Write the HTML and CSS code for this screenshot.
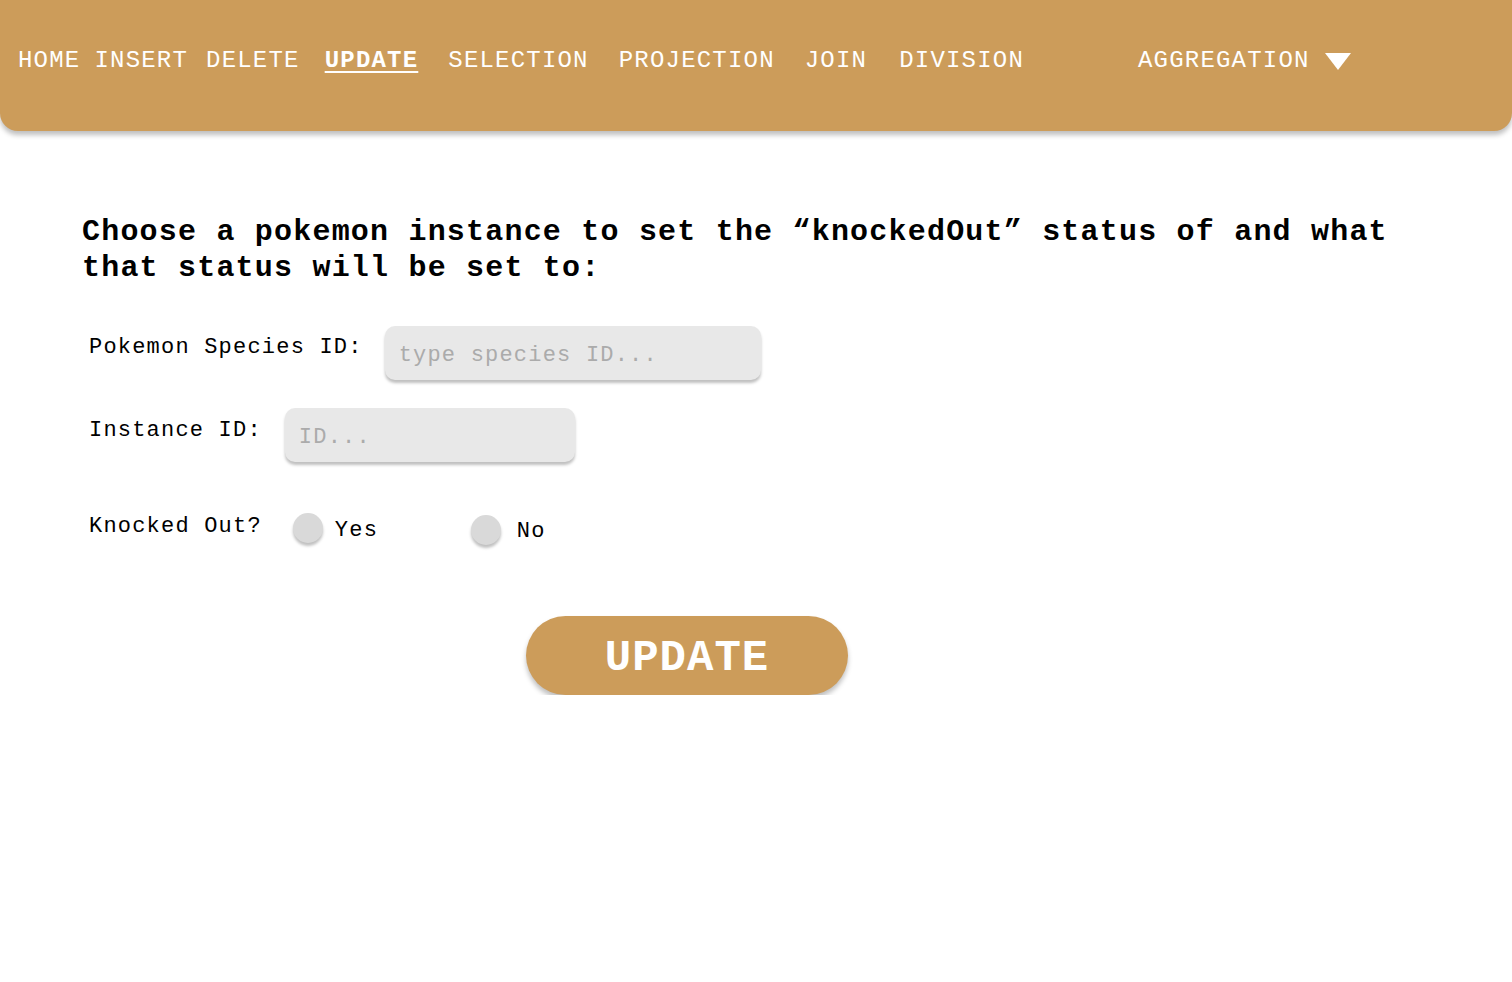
FILE: index.html
```html
<!DOCTYPE html>
<html lang="en">
<head>
<meta charset="utf-8">
<title>Update</title>
<link rel="stylesheet" href="styles.css">
</head>
<body>
<nav class="topnav">
  <a class="nav-link nav-home" href="#">HOME</a>
  <a class="nav-link nav-insert" href="#">INSERT</a>
  <a class="nav-link nav-delete" href="#">DELETE</a>
  <a class="nav-link nav-update active" href="#">UPDATE</a>
  <a class="nav-link nav-wide" href="#">SELECTION</a>
  <a class="nav-link nav-wide" href="#">PROJECTION</a>
  <a class="nav-link nav-wide" href="#">JOIN</a>
  <a class="nav-link nav-division" href="#">DIVISION</a>
  <a class="nav-link nav-agg" href="#">AGGREGATION<svg class="caret" width="26" height="17" viewBox="0 0 26 17"><polygon points="0,0 26,0 13,17" fill="#ffffff"/></svg></a>
</nav>
<main class="content">
  <h1 class="prompt">Choose a pokemon instance to set the “knockedOut” status of and what that status will be set to:</h1>
  <form class="form">
    <div class="row row-species">
      <label class="field-label" for="species">Pokemon Species ID:</label>
      <input class="field-input input-species" id="species" type="text" placeholder="type species ID...">
    </div>
    <div class="row row-instance">
      <label class="field-label" for="instance">Instance ID:</label>
      <input class="field-input input-instance" id="instance" type="text" placeholder="ID...">
    </div>
    <div class="row row-ko">
      <span class="field-label ko-label">Knocked Out?</span>
      <label class="radio-opt opt-yes"><span class="radio-dot"></span><span class="radio-text">Yes</span></label>
      <label class="radio-opt opt-no"><span class="radio-dot"></span><span class="radio-text">No</span></label>
    </div>
    <div class="actions">
      <button class="submit" type="button">UPDATE</button>
    </div>
  </form>
</main>
</body>
</html>
```
FILE: styles.css
```css
html, body {
  margin: 0;
  padding: 0;
  background: #ffffff;
}
body {
  font-family: "Liberation Mono", "Courier New", monospace;
  color: #000000;
  letter-spacing: 1.2px;
}
.topnav {
  box-sizing: border-box;
  height: 131px;
  background: #cc9c5a;
  border-radius: 0 0 18px 18px;
  box-shadow: 0 4px 5px rgba(0, 0, 0, 0.25);
  display: flex;
  align-items: flex-start;
  padding: 47px 18px 0 18px;
}
.nav-link {
  color: #ffffff;
  text-decoration: none;
  font-size: 24px;
  line-height: 28px;
  white-space: nowrap;
  display: flex;
  align-items: center;
}
.nav-insert { margin-left: 14px; }
.nav-delete { margin-left: 18px; }
.nav-update { margin-left: 25px; }
.nav-wide { margin-left: 30px; }
.nav-division { margin-left: 32px; }
.nav-agg { margin-left: 114px; }
.active {
  font-weight: bold;
  text-decoration: underline;
  text-underline-offset: 4px;
  text-decoration-thickness: 2px;
}
.caret {
  margin-left: 15px;
  margin-top: 1px;
}
.content {
  padding: 83px 0 0 82px;
}
.prompt {
  margin: 0;
  width: 1350px;
  font-size: 30px;
  line-height: 36px;
  font-weight: bold;
}
.form {
  margin: 40px 0 0 7px;
}
.row {
  display: flex;
  align-items: flex-start;
}
.field-label {
  font-size: 22px;
  line-height: 26px;
  white-space: nowrap;
}
.row-species .field-label { padding-top: 9px; margin-right: 22px; }
.row-instance { margin-top: 28px; }
.row-instance .field-label { padding-top: 10px; margin-right: 23px; }
.field-input {
  box-sizing: border-box;
  height: 54px;
  border: none;
  border-radius: 10px;
  background: #e8e8e8;
  box-shadow: 0 3px 3px rgba(0, 0, 0, 0.25);
  font-family: "Liberation Mono", "Courier New", monospace;
  font-size: 22px;
  letter-spacing: 1.2px;
  padding: 4px 14px 0 14px;
  color: #000;
  outline: none;
}
.field-input::placeholder { color: #ababab; }
.input-species { width: 376px; }
.input-instance { width: 290px; }
.row-ko {
  margin-top: 48px;
  align-items: center;
}
.ko-label { margin-right: 31px; margin-top: -1px; }
.radio-opt {
  display: flex;
  align-items: center;
  font-size: 22px;
  line-height: 26px;
}
.opt-yes { width: 178px; }
.radio-dot {
  width: 30px;
  height: 30px;
  border-radius: 50%;
  background: #d9d9d9;
  box-shadow: 0 3px 3px rgba(0, 0, 0, 0.25);
  margin-right: 12px;
}
.opt-no .radio-dot { margin-top: 4px; margin-right: 16px; }
.radio-text { margin-top: 6px; }
.opt-no .radio-text { margin-top: 9px; }
.actions {
  margin-top: 71px;
  padding-left: 437px;
}
.submit {
  width: 322px;
  height: 79px;
  border: none;
  border-radius: 40px;
  background: #cc9c5a;
  box-shadow: 0 4px 5px rgba(0, 0, 0, 0.25);
  color: #ffffff;
  font-family: "Liberation Mono", "Courier New", monospace;
  font-weight: bold;
  font-size: 44px;
  letter-spacing: 1px;
  padding: 6px 0 0 0;
  line-height: 73px;
}
```
